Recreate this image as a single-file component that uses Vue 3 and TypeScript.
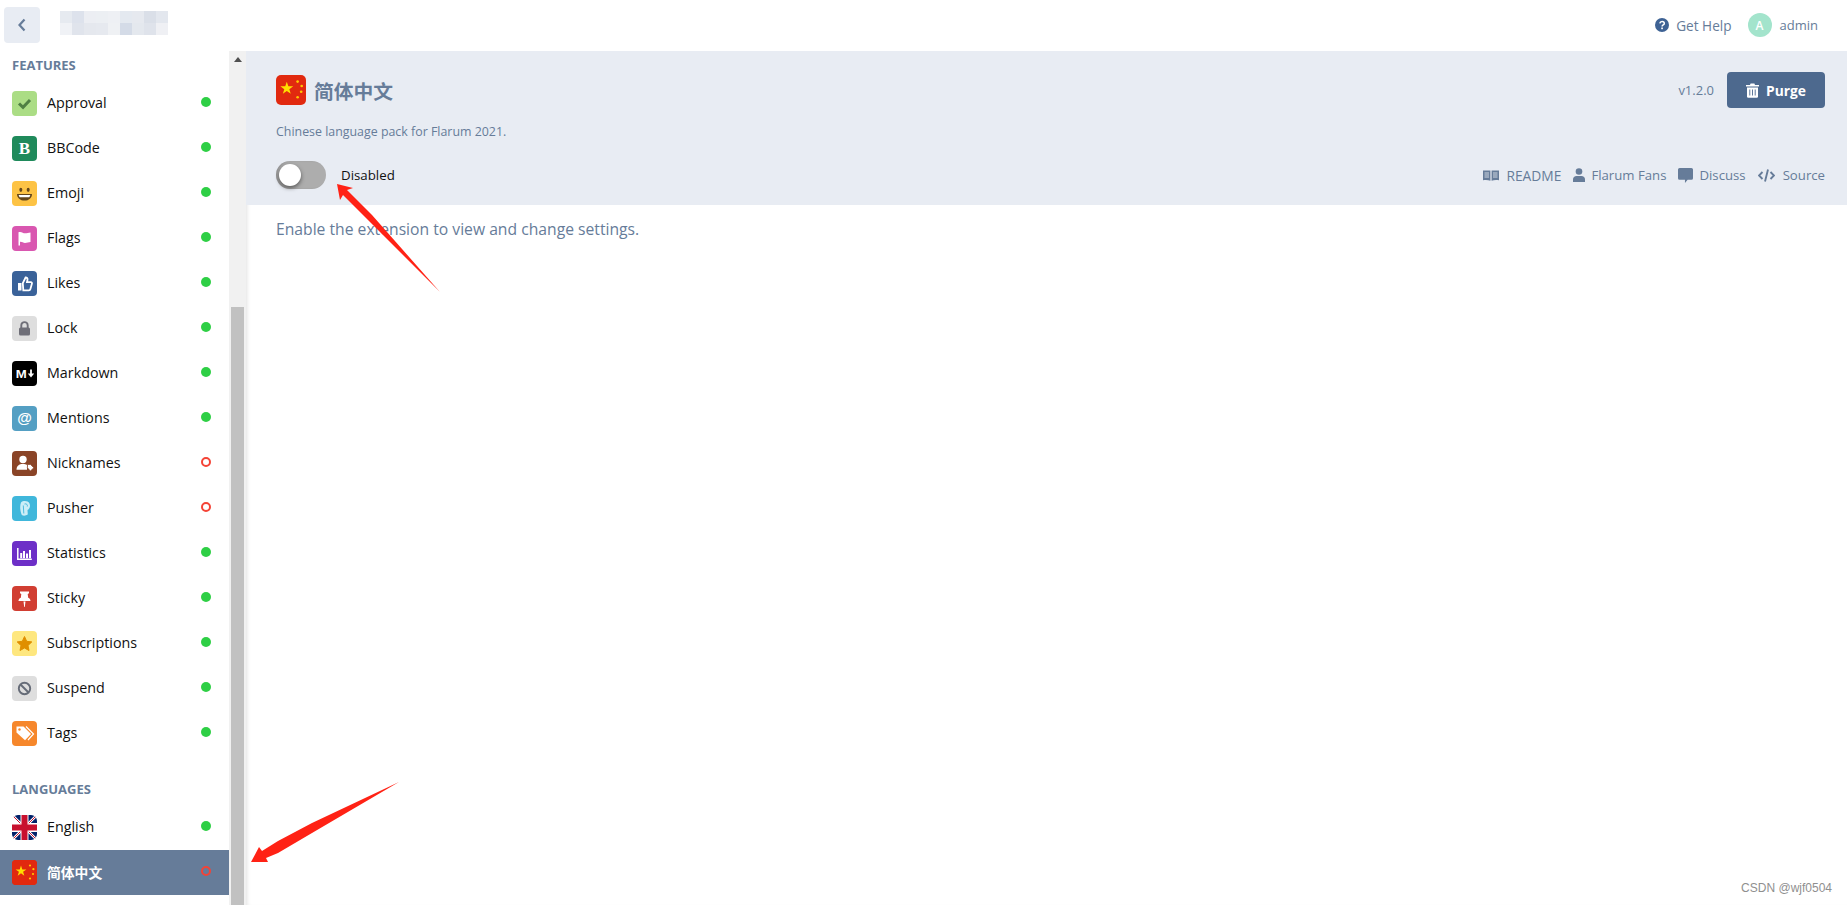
<script setup lang="ts">
interface Ext { name: string; bg: string; body: string; on: boolean }

const china = `<rect width="25" height="25" fill="#e1290f"/><polygon fill="#ffde00" points="9,5.6 10.3,9.4 14.4,9.4 11.1,11.8 12.3,15.7 9,13.3 5.7,15.7 6.9,11.8 3.6,9.4 7.7,9.4"/><g fill="#ffc800"><circle cx="18" cy="5.5" r="1.1"/><circle cx="21.4" cy="9.2" r="1.1"/><circle cx="21" cy="14" r="1.1"/><circle cx="18" cy="18.5" r="1.1"/></g>`;
const uk = `<rect width="25" height="25" fill="#fff"/><path fill="#012169" d="M0 0h10v8zM15 0h10v8h-10zM0 17h10v8h-10zM15 17h10v8h-10z"/><path stroke="#fff" stroke-width="2.600" d="M0 0l25 25M25 0L0 25"/><path stroke="#c8102e" stroke-width="1" d="M0 0l25 25M25 0L0 25"/><path fill="#fff" d="M8.500 0h8v25h-8zM0 8.500h25v8H0z"/><path fill="#c8102e" d="M9.500 0h6v25h-6zM0 9.500h25v6H0z"/>`;

const features: Ext[] = [
  { name: 'Approval', bg: '#abdd85', on: true, body: `<path d="M7 12.500l4 3.800 7-7.300" fill="none" stroke="#4f8043" stroke-width="3"/>` },
  { name: 'BBCode', bg: '#1f8a5b', on: true, body: `<text x="12.500" y="18.400" text-anchor="middle" font-family="Liberation Serif" font-weight="700" font-size="17" fill="#fff">B</text>` },
  { name: 'Emoji', bg: '#fdc345', on: true, body: `<ellipse cx="8.800" cy="8.800" rx="1.500" ry="2.100" fill="#65471b"/><ellipse cx="16.200" cy="8.800" rx="1.500" ry="2.100" fill="#65471b"/><path d="M5 13h15c0 4-3.200 6.600-7.500 6.600S5 17 5 13z" fill="#65471b"/><path d="M6.700 14h11.600c-.2 1.100-.6 1.700-1 2.200H7.700c-.4-.5-.9-1.100-1-2.200z" fill="#fff"/>` },
  { name: 'Flags', bg: '#d957b0', on: true, body: `<path d="M6.500 6.200c3-1 4.500 1.100 6.500 1.100 2 0 3.500-.6 5.500-.8v9.500c-2 .2-3.500.9-5.500.9-2 0-3.500-1.600-5-1V19.500H6.500z" fill="#fff"/>` },
  { name: 'Likes', bg: '#3a6299', on: true, body: `<path d="M6 12h3.500v7.500H6z" fill="#fff"/><path d="M10.800 12.200l2.800-5.700c1.500 0 2.100 1 1.900 2.300l-.5 2.300h3.800c1 0 1.400.9 1.100 1.700l-1.500 5.200c-.2.800-.7 1.300-1.500 1.300h-5.600z" fill="none" stroke="#fff" stroke-width="1.800"/>` },
  { name: 'Lock', bg: '#dedede', on: true, body: `<rect x="7" y="11.500" width="11" height="8" rx="1.500" fill="#6f6f78"/><path d="M9.300 12V9.300a3.200 3.200 0 0 1 6.400 0V12" fill="none" stroke="#6f6f78" stroke-width="1.900"/>` },
  { name: 'Markdown', bg: '#000', on: true, body: `<text x="3.700" y="16.500" font-family="Liberation Sans" font-weight="700" font-size="11.500" textLength="11" lengthAdjust="spacingAndGlyphs" fill="#fff">M</text><path d="M19 8.500v4.500" stroke="#fff" stroke-width="1.800"/><path d="M15.800 12.500h6.400L19 16.500z" fill="#fff"/>` },
  { name: 'Mentions', bg: '#549fc3', on: true, body: `<text x="12.500" y="17.300" text-anchor="middle" font-family="Liberation Sans" font-weight="700" font-size="15" fill="#fff">@</text>` },
  { name: 'Nicknames', bg: '#8a4427', on: false, body: `<circle cx="11" cy="8.500" r="3.700" fill="#fff"/><path d="M4.500 18.800c0-4 2.500-5.800 6.500-5.800 1.600 0 3 .3 4 1v4.800z" fill="#fff"/><path d="M15.500 13.500h3l3.300 3.300-3.400 3.200-3-3.200z" fill="#fff" stroke="#8a4427" stroke-width=".7"/>` },
  { name: 'Pusher', bg: '#40b7db', on: false, body: `<path d="M9 6.500c2-2 7-2 8.500 1 1.200 2.600.2 5.500-2 6.500l.3 4.500c-2 1.300-4.300 1.500-6 .5-1.700-4-2.200-9-.8-12.500z" fill="#cceef7"/><path d="M12.500 8c2-.8 3.300.8 2.800 2.500M11.300 9.500l.5 8" fill="none" stroke="#40b7db" stroke-width=".9"/>` },
  { name: 'Statistics', bg: '#6d2fc7', on: true, body: `<path d="M5.800 7v11.300h14" fill="none" stroke="#fff" stroke-width="1.500"/><path d="M8.200 12h2v5.200h-2zM11 10h2v7.200h-2zM14 12.500h2v4.700h-2zM17 9h2v8.200h-2z" fill="#fff"/>` },
  { name: 'Sticky', bg: '#d13e32', on: true, body: `<path d="M8 5.500h9v1.800l-1.300.7.500 3.800c1.500.7 2.300 1.800 2.300 3.200H6.500c0-1.400.8-2.500 2.300-3.200l.5-3.800L8 7.300zM11.500 15.500h2l-.7 5.500h-.6z" fill="#fff"/>` },
  { name: 'Subscriptions', bg: '#fee77f', on: true, body: `<polygon fill="#e08f00" stroke="#e08f00" stroke-width="1" stroke-linejoin="round" points="12.500,5.500 14.700,10.300 19.800,10.900 16,14.500 17,19.500 12.500,17 8,19.500 9,14.500 5.200,10.900 10.300,10.300"/>` },
  { name: 'Suspend', bg: '#dedede', on: true, body: `<circle cx="12.500" cy="12.500" r="5.700" fill="none" stroke="#666c78" stroke-width="1.900"/><path d="M8.500 8.500l8 8" stroke="#666c78" stroke-width="1.900"/>` },
  { name: 'Tags', bg: '#f6872b', on: true, body: `<path d="M4.500 5.500h7l7.500 7.500-6 6.200-8.500-7.700z" fill="#fff"/><circle cx="7.500" cy="8.500" r="1.200" fill="#f6872b"/><path d="M14 5.500l7.500 7.500-5.500 6" fill="none" stroke="#fff" stroke-width="1.200"/>` },
];

const languages: Ext[] = [
  { name: 'English', bg: '#fff', on: true, body: uk },
  { name: '简体中文', bg: '#e1290f', on: false, body: china },
];

const pixels = [
  '#e6eaf0', '#dde2ec', '#eceef3', '#eceff3', '#eef0f4', '#e4e9f0', '#e6e9ef', '#dadfe8', '#e3e7ee',
  '#f0f2f6', '#e0e4ec', '#e5e8ee', '#e6e9ef', '#eff1f4', '#d4dbe7', '#e4e8ee', '#dfe3eb', '#eff0f4',
];
</script>

<template>
  <div class="page">
    <header class="topbar">
      <div class="back">
        <svg width="12" height="14" viewBox="0 0 12 14"><path d="M8.500 1.500L3.500 7l5 5.500" fill="none" stroke="#667c99" stroke-width="2.200" /></svg>
      </div>
      <div class="logo">
        <i v-for="(c, i) in pixels" :key="i" :style="{ background: c }"></i>
      </div>
      <div class="spacer"></div>
      <div class="help">
        <svg width="14" height="14" viewBox="0 0 14 14">
          <circle cx="7" cy="7" r="7" fill="#3e6294" />
          <path d="M4.800 5.400c.2-1.200 1-1.900 2.300-1.900 1.300 0 2.200.8 2.200 1.900 0 1.600-2.200 1.500-2.200 3" fill="none" stroke="#fff" stroke-width="1.500" />
          <rect x="6.200" y="9.500" width="1.700" height="1.700" fill="#fff" />
        </svg>
        <span>Get Help</span>
      </div>
      <div class="user">
        <span class="avatar">A</span>
        <span>admin</span>
      </div>
    </header>

    <div class="content">
      <nav class="sidebar">
        <h4 class="group first">FEATURES</h4>
        <div v-for="e in features" :key="e.name" class="row">
          <svg class="ext-icon" viewBox="0 0 25 25" :style="{ background: e.bg }" v-html="e.body"></svg>
          <span class="name">{{ e.name }}</span>
          <span class="dot" :class="{ off: !e.on }"></span>
        </div>
        <h4 class="group second">LANGUAGES</h4>
        <div v-for="e in languages" :key="e.name" class="row" :class="{ active: !e.on }">
          <svg class="ext-icon" :class="{ round: e.on }" viewBox="0 0 25 25" :style="{ background: e.bg }" v-html="e.body"></svg>
          <span class="name">{{ e.name }}</span>
          <span class="dot" :class="{ off: !e.on }"></span>
        </div>
      </nav>

      <div class="scrollbar">
        <div class="scroll-up"></div>
        <div class="thumb"></div>
      </div>

      <main class="main">
        <section class="hero">
          <div class="hero-top">
            <svg class="hero-icon" viewBox="0 0 25 25" v-html="china"></svg>
            <h2 class="title">简体中文</h2>
            <div class="spacer"></div>
            <span class="version">v1.2.0</span>
            <button class="purge">
              <svg width="13" height="15" viewBox="0 0 13 15">
                <path d="M0 2h4l.6-1.500h3.800L9 2h4v1.500H0z" fill="#fff" />
                <path d="M1 4.500h11V13.500a1.300 1.300 0 0 1-1.300 1.300H2.300A1.300 1.300 0 0 1 1 13.500z" fill="#fff" />
                <path d="M3.800 6.500v6M6.500 6.500v6M9.200 6.500v6" stroke="#4d698e" stroke-width=".9" />
              </svg>
              <span>Purge</span>
            </button>
          </div>
          <p class="desc">Chinese language pack for Flarum 2021.</p>
          <div class="hero-bottom">
            <div class="toggle"><span class="knob"></span></div>
            <span class="status">Disabled</span>
            <div class="spacer"></div>
            <div class="links">
              <a>
                <svg width="16" height="13" viewBox="0 0 16 13">
                  <path d="M0 1.500h7.400v10.300c-2-.8-5-.8-7.400-.5zM8.600 1.500H16v9.800c-2.400-.3-5.400-.3-7.400.5z" fill="#667c99" />
                  <path d="M1.500 4h4.500M1.500 6h4.500M1.500 8h4.500M10 4h4.500M10 6h4.500M10 8h4.500" stroke="#e8ecf3" stroke-width=".8" />
                </svg>
                <span class="readme">README</span>
              </a>
              <a>
                <svg width="12" height="14" viewBox="0 0 12 14">
                  <circle cx="6" cy="3.500" r="3.300" fill="#667c99" />
                  <path d="M0 14v-2.500C0 9.300 1.500 8 3.500 8h5c2 0 3.500 1.300 3.500 3.500V14z" fill="#667c99" />
                </svg>
                <span>Flarum Fans</span>
              </a>
              <a>
                <svg width="15" height="15" viewBox="0 0 14 14">
                  <path d="M1.500 0h11A1.500 1.500 0 0 1 14 1.500v8a1.500 1.500 0 0 1-1.500 1.500H9L6.500 14v-3h-5A1.500 1.500 0 0 1 0 9.500v-8A1.500 1.500 0 0 1 1.500 0z" fill="#667c99" />
                </svg>
                <span>Discuss</span>
              </a>
              <a>
                <svg width="17" height="13" viewBox="0 0 17 13">
                  <path d="M4.500 3L1 6.500 4.500 10M12.500 3L16 6.500 12.500 10M10 .5L7 12.500" fill="none" stroke="#667c99" stroke-width="1.900" />
                </svg>
                <span class="source">Source</span>
              </a>
            </div>
          </div>
        </section>
        <p class="notice">Enable the extension to view and change settings.</p>
      </main>
    </div>

    <svg class="annotations" width="1847" height="905" viewBox="0 0 1847 905">
      <polygon fill="#ff2215" points="440,292 372,215 347,190 353,188 337,184 340,200 343,195 363,215" />
      <polygon fill="#ff2215" points="399,782 312,833 278,853 266,858 268,862 251,862 259,847 262,851 278,841 312,823" />
    </svg>
    <div class="watermark">CSDN @wjf0504</div>
  </div>
</template>

<style>
html, body { margin: 0; background: #fff; overflow: hidden; }
</style>

<style scoped>
.page {
  position: relative;
  height: 905px;
  overflow: hidden;
  display: flex;
  flex-direction: column;
  font-family: "Open Sans", "Noto Sans CJK SC", sans-serif;
  font-size: 13px;
  color: #111;
}
.spacer { flex: 1; }
.topbar {
  height: 51px;
  flex: none;
  display: flex;
  align-items: center;
  padding: 0 29px 1px 4px;
  box-sizing: border-box;
}
.back {
  width: 36px;
  height: 36px;
  border-radius: 4px;
  background: #e8ecf3;
  display: flex;
  align-items: center;
  justify-content: center;
}
.logo {
  margin: 0 0 4px 20px;
  display: grid;
  grid-template-columns: repeat(9, 12px);
  grid-auto-rows: 12px;
}
.logo i { display: block; }
.help {
  display: flex;
  align-items: center;
  gap: 7px;
  color: #667c99;
  font-size: 13.600px;
}
.user {
  display: flex;
  align-items: center;
  gap: 8px;
  margin-left: 16px;
  color: #667c99;
  font-size: 13px;
}
.avatar {
  width: 24px;
  height: 24px;
  border-radius: 50%;
  background: #a3e4cc;
  color: #fff;
  display: flex;
  align-items: center;
  justify-content: center;
  font-size: 12px;
  font-weight: 600;
}
.content { flex: 1; display: flex; min-height: 0; }
.sidebar { width: 229px; flex: none; overflow: hidden; }
.group {
  margin: 0;
  font-size: 13px;
  font-weight: 700;
  color: #667c99;
  line-height: 16px;
  padding-left: 12px;
}
.group.first { margin-top: 6px; margin-bottom: 8px; }
.group.second { margin-top: 25px; margin-bottom: 8px; }
.row {
  height: 45px;
  display: flex;
  align-items: center;
  padding: 0 18px 0 12px;
  font-size: 14.300px;
}
.row.active { background: #667c99; color: #fff; font-weight: 700; font-size: 13.800px; }
.ext-icon {
  width: 25px;
  height: 25px;
  flex: none;
  border-radius: 4px;
  margin-right: 10px;
}
.ext-icon.round { border-radius: 6px; }
.name { flex: 1; margin-bottom: 2px; }
.dot {
  width: 10px;
  height: 10px;
  border-radius: 50%;
  background: #2ecf45;
  box-sizing: border-box;
  margin-bottom: 3px;
}
.dot.off { background: transparent; border: 2px solid #f44336; }
.scrollbar {
  width: 17px;
  flex: none;
  background: #f1f1f1;
  display: flex;
  flex-direction: column;
  align-items: center;
}
.scroll-up {
  margin-top: 6px;
  width: 0;
  height: 0;
  border-left: 4px solid transparent;
  border-right: 4px solid transparent;
  border-bottom: 5px solid #505050;
}
.thumb { margin-top: 245px; width: 13px; flex: 1; background: #c1c1c1; }
.main {
  flex: 1;
  min-width: 0;
  box-shadow: inset 4px 0 4px -3px rgba(0, 0, 0, 0.12);
}
.hero {
  background: #e8ecf3;
  height: 154px;
  box-sizing: border-box;
  padding: 21px 22px 0 30px;
  display: flex;
  flex-direction: column;
}
.hero-top { display: flex; align-items: center; height: 36px; }
.hero-icon { width: 30px; height: 30px; border-radius: 5px; margin-right: 8px; }
.title { margin: 0; font-size: 19.800px; font-weight: 700; color: #667c99; }
.version { color: #667c99; font-size: 13px; margin-right: 13px; }
.purge {
  width: 98px;
  height: 36px;
  border: 0;
  border-radius: 4px;
  background: #4d698e;
  color: #fff;
  font: 700 13.800px "Open Sans", sans-serif;
  display: flex;
  align-items: center;
  justify-content: center;
  gap: 7px;
}
.desc { margin: 15px 0 0; font-size: 12.400px; line-height: 17px; color: #667c99; }
.hero-bottom { display: flex; align-items: center; margin-top: 21px; height: 28px; }
.toggle {
  width: 50px;
  height: 28px;
  border-radius: 14px;
  background: #adadad;
  box-sizing: border-box;
  padding: 3px;
  box-shadow: inset 2px 0 3px -1px rgba(0, 0, 0, 0.2);
}
.knob {
  display: block;
  width: 22px;
  height: 22px;
  border-radius: 50%;
  background: #fff;
  box-shadow: 0 2px 4px rgba(0, 0, 0, 0.5);
}
.status { margin-left: 15px; font-size: 13.300px; }
.links { display: flex; align-items: center; gap: 12px; color: #667c99; font-size: 13.200px; }
.links a { display: flex; align-items: center; gap: 6px; }
.readme { font-size: 13.800px; margin-left: 1px; }
.source { margin-left: 2px; }
.notice {
  margin: 14px 0 0 30px;
  font-size: 15.700px;
  line-height: 20px;
  color: #667c99;
}
.annotations { position: absolute; left: 0; top: 0; pointer-events: none; }
.watermark {
  position: absolute;
  right: 15px;
  top: 881px;
  font: 12px "Liberation Sans", sans-serif;
  color: #8f8f8f;
}
</style>
